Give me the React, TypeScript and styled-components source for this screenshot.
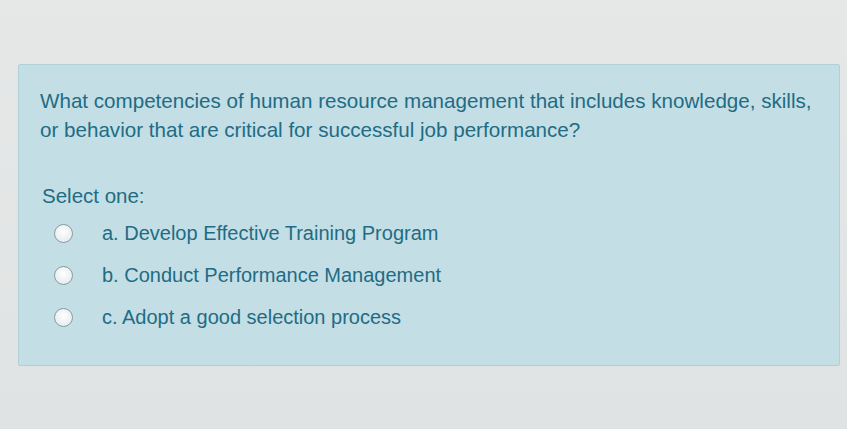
import styled, { createGlobalStyle } from "styled-components";

const GlobalStyle = createGlobalStyle`
  html, body {
    margin: 0;
    padding: 0;
    background: #e3e5e5;
  }
  body {
    font-family: "Liberation Sans", Arial, sans-serif;
  }
`;

const Page = styled.div`
  width: 847px;
  height: 429px;
  padding: 64px 0 0 18px;
  box-sizing: border-box;
  background: linear-gradient(180deg, #e6e8e8 0%, #e0e3e3 100%);
  overflow: hidden;
`;

const QuestionCard = styled.div`
  width: 822px;
  height: 302px;
  box-sizing: border-box;
  padding: 21px 0 0 21px;
  background: #c3dee5;
  border: 1px solid #b0d0d8;
  border-radius: 2px;
  color: #1f6c84;
`;

const QuestionText = styled.p`
  margin: 0;
  font-size: 20.6px;
  line-height: 29px;
  white-space: nowrap;
`;

const Prompt = styled.div`
  margin-top: 40px;
  padding-left: 2px;
  font-size: 20.5px;
  line-height: 24px;
`;

const Options = styled.div`
  display: flex;
  flex-direction: column;
  gap: 18px;
  margin-top: 13px;
  padding-left: 14px;
`;

const OptionRow = styled.label`
  display: flex;
  align-items: center;
  gap: 29px;
  font-size: 20px;
  line-height: 24px;
`;

const Radio = styled.span`
  width: 17px;
  height: 17px;
  border-radius: 50%;
  border: 1.5px solid #8a9a9e;
  background: radial-gradient(circle at 50% 40%, #ffffff 0%, #e9eeee 70%, #d6dcdc 100%);
  flex-shrink: 0;
`;

const options = [
  "a. Develop Effective Training Program",
  "b. Conduct Performance Management",
  "c. Adopt a good selection process",
];

export default function App() {
  return (
    <>
      <GlobalStyle />
      <Page>
        <QuestionCard>
          <QuestionText>
            What competencies of human resource management that includes knowledge, skills,
            <br />
            or behavior that are critical for successful job performance?
          </QuestionText>
          <Prompt>Select one:</Prompt>
          <Options>
            {options.map((o) => (
              <OptionRow key={o}>
                <Radio />
                {o}
              </OptionRow>
            ))}
          </Options>
        </QuestionCard>
      </Page>
    </>
  );
}
